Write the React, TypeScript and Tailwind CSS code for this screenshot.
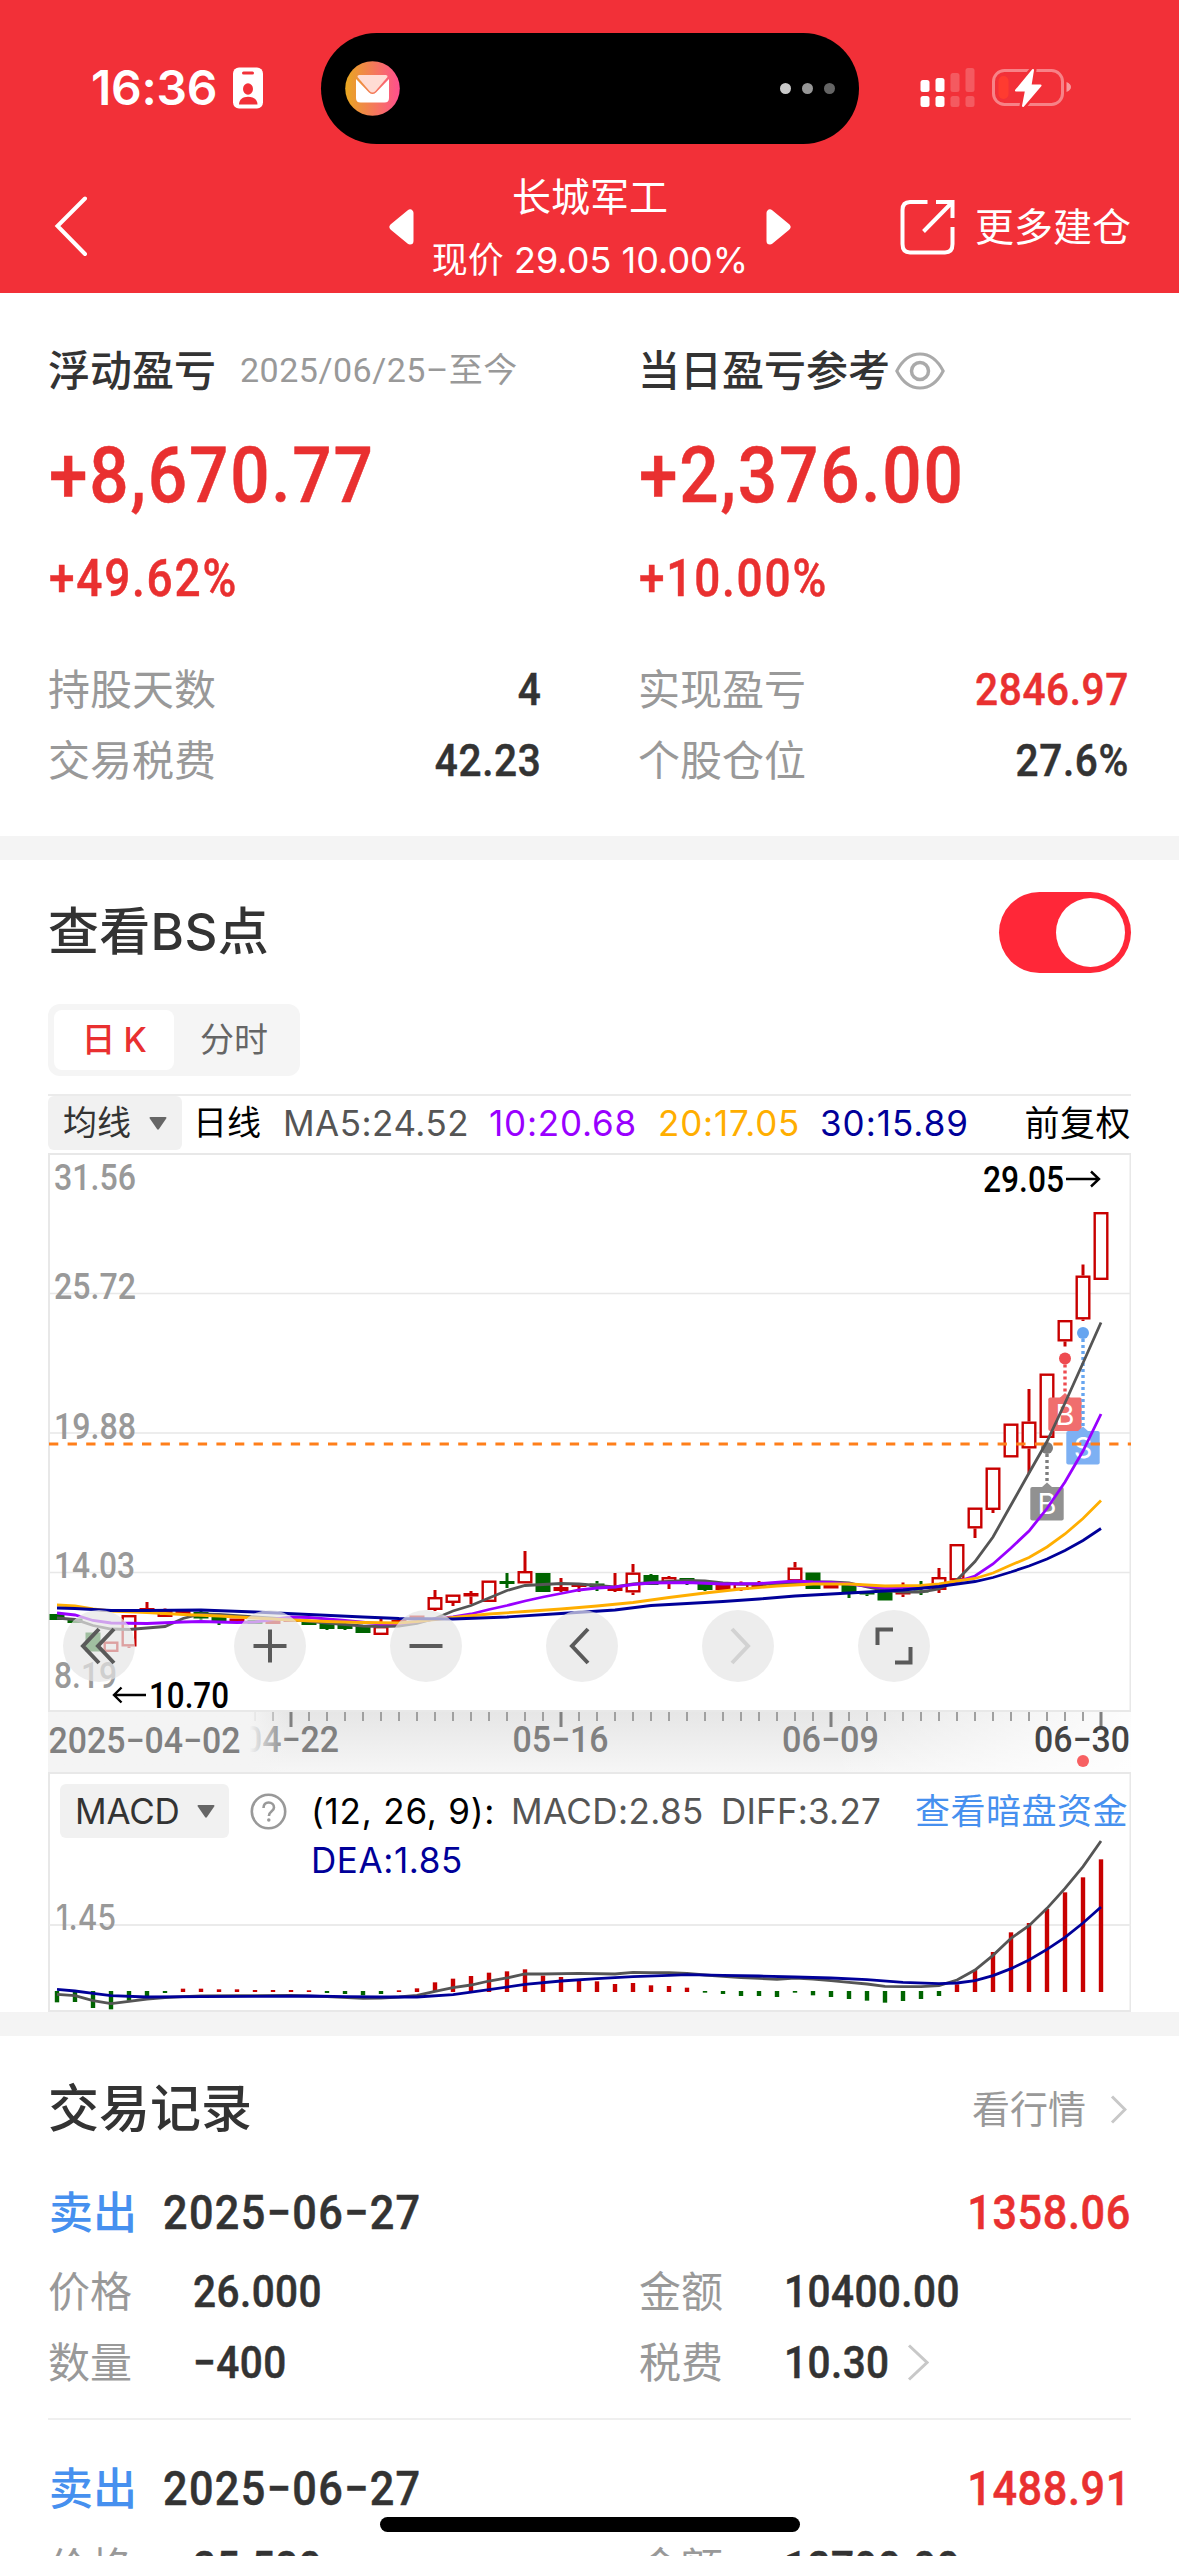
import React from "react";

const SANS = "font-['Inter','Noto_Sans_CJK_SC',sans-serif]";
const DIN = "font-['Roboto','Noto_Sans_CJK_SC',sans-serif] [-webkit-text-stroke:0.5px]";

/* One candle: [index, bodyTop, bodyBottom, wickTop, wickBottom, kind] */
type Kind = "up" | "upFill" | "down";
type Candle = [number, number, number, number, number, Kind];

const candles: Candle[] = [
  [0, 1614, 1620, 1614, 1620, "down"],
  [1, 1618.5, 1623, 1618.5, 1623, "down"],
  [2, 1632.5, 1651.5, 1632.5, 1651.5, "down"],
  [3, 1641.5, 1652, 1641.5, 1652, "up"],
  [4, 1615, 1646.5, 1615, 1648, "up"],
  [5, 1608, 1610.5, 1602, 1610.5, "upFill"],
  [6, 1611, 1617, 1608.5, 1617, "up"],
  [7, 1611, 1615, 1611, 1615, "upFill"],
  [8, 1612, 1618.5, 1611, 1619.5, "down"],
  [9, 1617, 1623, 1617, 1625, "down"],
  [10, 1618.5, 1621.5, 1618.5, 1621.5, "upFill"],
  [11, 1620, 1624, 1620, 1624, "down"],
  [12, 1620, 1624, 1620, 1624, "upFill"],
  [13, 1620, 1622, 1620, 1622, "upFill"],
  [14, 1621.5, 1625, 1621.5, 1625, "down"],
  [15, 1623, 1629, 1623, 1630, "down"],
  [16, 1624, 1629, 1624, 1630, "down"],
  [17, 1625, 1633, 1625, 1633, "down"],
  [18, 1626, 1635, 1619, 1635, "up"],
  [19, 1620, 1623, 1619, 1623, "upFill"],
  [20, 1615.5, 1619, 1615.5, 1619, "upFill"],
  [21, 1597, 1610, 1590, 1611, "up"],
  [22, 1594.5, 1603, 1594.5, 1606, "up"],
  [23, 1593, 1596.5, 1591, 1604, "upFill"],
  [24, 1580.5, 1602, 1580.5, 1602, "up"],
  [25, 1581, 1584, 1573, 1588, "down"],
  [26, 1571, 1583.5, 1551, 1583.5, "up"],
  [27, 1573, 1592, 1573, 1592, "down"],
  [28, 1587, 1591, 1578, 1592, "upFill"],
  [29, 1585, 1587, 1583, 1592, "upFill"],
  [30, 1583.5, 1587, 1581, 1591, "down"],
  [31, 1587, 1591, 1573, 1592, "upFill"],
  [32, 1572.5, 1592.5, 1564, 1595, "up"],
  [33, 1575, 1585, 1574, 1585, "down"],
  [34, 1577, 1583, 1576, 1589, "up"],
  [35, 1578, 1582, 1578, 1585, "down"],
  [36, 1582, 1590, 1582, 1591, "down"],
  [37, 1585, 1590, 1584, 1590, "upFill"],
  [38, 1583, 1590, 1581.5, 1591, "up"],
  [39, 1583, 1587, 1581, 1588, "upFill"],
  [40, 1583, 1586.5, 1581, 1587, "down"],
  [41, 1567.5, 1581.5, 1562, 1581.5, "up"],
  [42, 1572.5, 1589, 1572.5, 1589, "down"],
  [43, 1583.5, 1588.5, 1583.5, 1588.5, "upFill"],
  [44, 1585, 1593.5, 1585, 1598, "down"],
  [45, 1592, 1594.5, 1592, 1596, "down"],
  [46, 1592, 1600.5, 1592, 1600.5, "down"],
  [47, 1592, 1594.5, 1582.5, 1597, "upFill"],
  [48, 1590.5, 1592.5, 1581, 1595, "down"],
  [49, 1577, 1590, 1568, 1593, "up"],
  [50, 1544, 1580.5, 1544, 1580.5, "up"],
  [51, 1507.5, 1528.5, 1507.5, 1538, "up"],
  [52, 1467.5, 1510, 1467.5, 1513, "up"],
  [53, 1423.5, 1457.5, 1423.5, 1457.5, "up"],
  [54, 1421.5, 1448.5, 1389, 1473, "up"],
  [55, 1373.5, 1438, 1373.5, 1438, "up"],
  [56, 1320, 1341.5, 1320, 1346.5, "up"],
  [57, 1275.5, 1319.5, 1264.5, 1321, "up"],
  [58, 1212, 1280, 1212, 1280, "up"],
];

type Pt = [number, number];

const ma5: Pt[] = [[0,1618],[1,1619.5],[2,1625.5],[3,1629],[4,1629.5],[5,1628],[6,1626.5],[7,1618.5],[8,1614],[9,1614.5],[11,1617],[13,1619.5],[15,1623],[17,1626],[18,1626.5],[19,1626],[20,1623.5],[21,1618.5],[22,1611],[23,1605.5],[24,1598],[25,1590.5],[26,1585.5],[27,1584.5],[28,1583.5],[29,1584],[30,1585.5],[31,1587],[32,1584],[33,1582.5],[34,1581.5],[35,1580.5],[36,1581],[37,1583],[38,1584],[40,1584],[41,1582.5],[42,1582],[43,1582],[44,1583],[45,1587],[46,1590.5],[47,1592],[48,1592],[49,1589],[50,1580],[51,1561.5],[52,1537],[53,1505],[54,1473],[55,1441.5],[56,1403],[57,1363],[58,1322.5]];
const ma10: Pt[] = [[0,1613],[1,1615],[2,1620.5],[3,1623],[5,1623.5],[7,1622],[8,1621.5],[10,1622.5],[11,1622],[12,1619.5],[13,1617],[14,1617.5],[16,1620.5],[18,1624],[19,1623.5],[20,1621.5],[21,1619],[22,1617],[23,1614],[24,1609.5],[25,1605.5],[26,1601],[27,1597],[28,1593.5],[29,1590],[30,1588],[31,1587],[32,1584.5],[33,1583],[35,1582.5],[37,1584],[39,1583.5],[41,1581],[42,1582],[43,1582.5],[44,1584],[45,1586],[46,1588],[48,1588],[49,1585.5],[50,1581.5],[51,1576],[52,1564],[53,1548],[54,1531],[55,1508.5],[56,1482],[57,1451],[58,1414]];
const ma20: Pt[] = [[0,1605],[1,1606],[2,1609],[3,1611],[5,1612.5],[7,1614.5],[9,1616],[11,1618],[13,1620],[15,1621.5],[17,1622.5],[19,1623],[20,1621.5],[22,1617.5],[24,1614],[26,1611.5],[28,1609],[30,1606],[32,1602.5],[34,1597.5],[36,1593],[38,1589],[40,1586],[42,1584],[44,1584],[46,1586],[48,1585.5],[49,1584],[50,1581],[51,1578.5],[52,1573],[53,1565],[54,1557.5],[55,1547],[56,1534],[57,1518.5],[58,1500.5]];
const ma30: Pt[] = [[0,1608],[1,1608.5],[3,1610.5],[5,1610.5],[8,1610],[11,1612],[14,1614.5],[17,1617],[19,1618.5],[22,1619],[25,1617],[28,1613.5],[31,1610],[33,1605.5],[35,1603.5],[37,1601.5],[39,1599],[41,1596],[43,1594],[45,1592],[47,1590],[49,1586.5],[51,1581.5],[52,1577.5],[53,1572],[54,1566],[55,1559],[56,1550.5],[57,1540.5],[58,1528.5]];

/* MACD series in thirds of a pixel below the panel origin */
const histogram = [697,696,714,718,692,678,669,656,656,658,658,660,660,660,661,669,672,676,672,661,655,637,626,618,608,604,598,617,621,632,634,642,639,646,648,653,668,672,678,678,681,668,676,681,687,692,698,693,687,678,643,600,546,487,459,417,367,322,268];
const diff: Pt[] = [[0,673],[1,677],[2,692],[3,701],[4,694],[5,687],[6,683],[7,680],[8,678],[10,677],[13,676],[15,680],[17,685],[18,684],[19,681],[20,676],[21,664],[22,653],[23,645],[24,633],[25,624],[26,612],[27,612],[29,610],[31,612],[32,607],[33,608],[34,608],[35,610],[36,615],[37,619],[38,623],[39,625],[40,628],[41,624],[42,627],[43,632],[44,637],[45,642],[46,649],[47,650],[48,650],[49,647],[50,630],[51,600],[52,556],[53,505],[54,467],[55,415],[56,355],[57,290],[58,213]];
const dea: Pt[] = [[0,658],[1,663],[2,670],[3,677],[5,681],[8,680],[11,679],[14,678],[16,680],[18,681],[20,681],[22,674],[24,659],[26,643],[28,633],[30,626],[32,620],[34,616],[35,614],[37,616],[39,618],[41,621],[43,624],[45,629],[47,637],[49,641],[50,639],[51,632],[52,617],[53,596],[54,570],[55,538],[56,502],[57,459],[58,411]];

const cx = (k: number) => 57 + 18 * k;
const line = (pts: Pt[]) => pts.map(([k, y]) => `${cx(k)},${y}`).join(" ");
const macdLine = (pts: Pt[]) => pts.map(([k, y]) => `${cx(k)},${1770 + y / 3}`).join(" ");

const RED = "#c80000";
const GREEN = "#006400";

function CandleShape({ c }: { c: Candle }) {
  const [k, top, bottom, wickTop, wickBottom, kind] = c;
  const x = cx(k);
  const color = kind === "down" ? GREEN : RED;
  return (
    <g fill={color}>
      {wickTop < top && <rect x={x - 1.5} y={wickTop} width={3} height={top - wickTop} />}
      {wickBottom > bottom && <rect x={x - 1.5} y={bottom} width={3} height={wickBottom - bottom} />}
      {kind === "up" ? (
        <rect x={x - 6.3} y={top + 1.2} width={12.6} height={bottom - top - 2.4} fill="#fff" stroke={color} strokeWidth={2.4} />
      ) : (
        <rect x={x - 7.5} y={top} width={15} height={bottom - top} />
      )}
    </g>
  );
}

/* Condensed chart figure, fitted to a fixed advance width */
function Figure({ x, y, w, fill = "#000", children }: { x: number; y: number; w: number; fill?: string; children: string }) {
  return (
    <text x={x} y={y} fill={fill} fontFamily="Roboto" fontWeight={500} fontSize={36} textLength={w} lengthAdjust="spacingAndGlyphs">{children}</text>
  );
}

function Marker({ x, dot, box, letter, dotColor, boxColor }: { x: number; dot: number; box: number; letter: string; dotColor: string; boxColor: string }) {
  return (
    <g>
      <circle cx={x} cy={dot} r={6} fill={dotColor} />
      <line x1={x} x2={x} y1={dot + 6} y2={box - 3} stroke={dotColor} strokeWidth={3.4} strokeDasharray="3 3" />
      <path d={`M${x - 6} ${box + 1}l6 -5.5l6 5.5z`} fill={boxColor} />
      <rect x={x - 16.7} y={box} width={33.4} height={33.4} rx={2} fill={boxColor} />
      <text x={x} y={box + 27} textAnchor="middle" fill="#fff" fontFamily="Inter" fontSize={29}>{letter}</text>
    </g>
  );
}

function PriceChart() {
  const labels: [string, number, number][] = [["31.56", 1190, 82], ["25.72", 1299, 82], ["19.88", 1438.5, 82], ["14.03", 1578, 81], ["8.19", 1688, 63]];
  return (
    <svg className="block" width={1083} height={559} viewBox="48 1153 1083 559">
      <g stroke="#e8e8e8" strokeWidth={2} fill="none">
        <path d="M49 1154H1130.5V1711H49z" />
        <path d="M49 1293.5H1131M49 1433H1131M49 1572.5H1131" strokeWidth={1.5} />
      </g>
      {labels.map(([t, y, w]) => <Figure key={t} x={54} y={y} w={w} fill="#999">{t}</Figure>)}
      {candles.map((c) => <CandleShape key={c[0]} c={c} />)}
      <Marker x={1047} dot={1448} box={1487} letter="B" dotColor="#7d7d7d" boxColor="#919191" />
      <Marker x={1065} dot={1358.5} box={1397.5} letter="B" dotColor="#ee4b50" boxColor="#f06e6e" />
      <Marker x={1083} dot={1333} box={1431} letter="S" dotColor="#66a5f0" boxColor="#7db0f3" />
      <line x1={49} x2={1131} y1={1444} y2={1444} stroke="#ff7f1a" strokeWidth={3} strokeDasharray="9.3 9.3" />
      <g fill="none" strokeWidth={2.8}>
        <polyline points={line(ma5)} stroke="#555" />
        <polyline points={line(ma10)} stroke="#9900ff" />
        <polyline points={line(ma20)} stroke="#ffae00" />
        <polyline points={line(ma30)} stroke="#000099" />
      </g>
      <Figure x={983} y={1192} w={81}>29.05</Figure>
      <Figure x={149} y={1708} w={80}>10.70</Figure>
      <g fill="none" stroke="#000" strokeWidth={2.4}>
        <path d="M1066 1179H1099M1091 1171.5L1099 1179L1091 1186.5" />
        <path d="M146 1695H114M121.5 1687.5L114 1695L121.5 1702.5" />
      </g>
    </svg>
  );
}

function RoundButton({ children }: { children: React.ReactNode }) {
  return (
    <span className="flex size-[72px] items-center justify-center rounded-full bg-[#e6e6e6]/70">
      <svg width={72} height={72} viewBox="0 0 72 72" fill="none" stroke="#5a5a5a" strokeWidth={4}>{children}</svg>
    </span>
  );
}

function Axis() {
  return (
    <div className="relative h-[60px] w-[1083px]">
      <div className="absolute inset-0 bg-linear-to-b from-[#e6e6e6] to-[#f6f6f6]" />
      <div className="absolute inset-0 bg-linear-to-r from-transparent from-72% to-white/90" />
      <svg className="absolute inset-0" width={1083} height={60} viewBox="48 1712 1083 60">
        {Array.from({ length: 48 }, (_, i) => i + 11).map((k) => {
          const major = (k - 13) % 15 === 0;
          return <rect key={k} x={cx(k) - (major ? 1.5 : 1)} y={1712} width={major ? 3 : 2} height={major ? 15 : 9} fill={major ? "#808080" : "#a0a0a0"} />;
        })}
        <Figure x={243} y={1752} w={96} fill="#808080">04−22</Figure>
        <Figure x={512.5} y={1752} w={96} fill="#808080">05−16</Figure>
        <Figure x={782} y={1752} w={97} fill="#808080">06−09</Figure>
        <Figure x={1034} y={1752} w={96} fill="#444">06−30</Figure>
      </svg>
      <div className="absolute inset-y-0 left-0 w-[240px] bg-linear-to-r from-[#f4f4f4] from-84% to-[#f4f4f4]/0" />
      <svg className="absolute left-0 top-0" width={300} height={60} viewBox="48 1712 300 60">
        <Figure x={48.5} y={1753} w={192} fill="#808080">2025−04−02</Figure>
      </svg>
      <span className="absolute right-[42px] top-[43px] size-3 rounded-full bg-[#f76062]" />
    </div>
  );
}

function MacdChart() {
  return (
    <svg className="absolute inset-0" width={1083} height={240} viewBox="48 1772 1083 240">
      <path d="M49 1773H1130.5V2011H49z" fill="none" stroke="#e8e8e8" strokeWidth={2} />
      <path d="M49 1925H1131" stroke="#ebebeb" strokeWidth={2} />
      <text x={56} y={1930} fontFamily="Inter" fontWeight={500} fontSize={35} textLength={60} lengthAdjust="spacingAndGlyphs" fill="#999">1.45</text>
      {histogram.map((v, k) => {
        const y = 1770 + v / 3;
        return v < 663
          ? <rect key={k} x={cx(k) - 2.2} y={y} width={4.4} height={1992 - y} fill={RED} />
          : <rect key={k} x={cx(k) - 2.2} y={1991} width={4.4} height={y - 1991} fill={GREEN} />;
      })}
      <g fill="none" strokeWidth={2.8}>
        <polyline points={macdLine(diff)} stroke="#555" />
        <polyline points={macdLine(dea)} stroke="#000099" />
      </g>
    </svg>
  );
}

function Caret({ className = "" }: { className?: string }) {
  return (
    <svg className={className} width={18} height={13} viewBox="0 0 18 13">
      <path d="M1.5 0H16.5Q18 0 17.2 1.5L10 12Q9 13.3 8 12L.8 1.5Q0 0 1.5 0z" fill="#666" />
    </svg>
  );
}

function Chevron({ w, h }: { w: number; h: number }) {
  return (
    <svg width={w} height={h} viewBox={`0 0 ${w} ${h}`} fill="none" stroke="#c8c8c8" strokeWidth={3}>
      <path d={`M2 1.5L${w - 2} ${h / 2}L2 ${h - 1.5}`} />
    </svg>
  );
}

function StatusBar() {
  return (
    <div className="flex h-[177px] items-start">
      <div className={`flex w-[321px] items-center pl-[91px] pt-[60px] ${SANS}`}>
        <span className="w-[142px] text-[48px] font-semibold leading-[56px] tracking-[-0.3px]">16:36</span>
        <svg width={30} height={42} viewBox="0 0 30 42">
          <rect width={30} height={41} rx={6} y={0.5} fill="#fff" />
          <rect x={9} y={4.5} width={12} height={3} rx={1.5} fill="#f23038" />
          <ellipse cx={15} cy={22} rx={5} ry={5.8} fill="#f23038" />
          <path d="M6 37.5C6 32.5 10 29.8 15 29.8S24.5 32.5 24.5 37.5z" fill="#f23038" />
        </svg>
      </div>
      <div className="mt-[33px] flex h-[111px] w-[538px] items-center justify-between rounded-full bg-black pl-6 pr-6">
        <svg width={55} height={55} viewBox="0 0 55 55">
          <defs>
            <linearGradient id="mail"><stop offset="0" stopColor="#e8a820" /><stop offset="1" stopColor="#ff4f8e" /></linearGradient>
          </defs>
          <circle cx={27.5} cy={27.5} r={27.3} fill="url(#mail)" />
          <path d="M11 18L24 31.5Q27.5 34.5 31 31.5L44 18V37Q44 41.5 39.5 41.5H15.5Q11 41.5 11 37z" fill="#fff" />
          <path d="M14 14H41Q43 14.5 42.5 16L30.5 30Q27.5 33 24.5 30L12.5 16Q12 14.5 14 14z" fill="#ffdcd4" />
        </svg>
        <span className="flex gap-[11px]">
          <i className="size-[11px] rounded-full bg-[#cacaca]" />
          <i className="size-[11px] rounded-full bg-[#979797]" />
          <i className="size-[11px] rounded-full bg-[#646464]" />
        </span>
      </div>
      <svg className="ml-[60px] mt-[66px]" width={156} height={44} viewBox="919 66 156 44">
        <g fill="#fff">
          <rect x={920.5} y={80} width={9} height={12} rx={2.5} />
          <rect x={935.5} y={78} width={9} height={14} rx={2.5} />
          <rect x={920.5} y={96} width={9} height={11} rx={2.5} />
          <rect x={935.5} y={96} width={9} height={11} rx={2.5} />
          <g opacity={0.2}>
            <rect x={950.5} y={73} width={9} height={19} rx={2.5} />
            <rect x={965.5} y={68} width={9} height={24} rx={2.5} />
            <rect x={950.5} y={96} width={9} height={11} rx={2.5} />
            <rect x={965.5} y={96} width={9} height={11} rx={2.5} />
          </g>
          <path d="M1066.5 82Q1071 84 1071 87T1066.5 92z" opacity={0.5} />
        </g>
        <rect x={993.5} y={70.5} width={69} height={34} rx={11} fill="none" stroke="#fff" strokeOpacity={0.4} strokeWidth={3} />
        <rect x={998.5} y={76} width={10} height={23} rx={5} fill="#ff3b30" />
        <path d="M1033 70L1016 90.5H1026L1023 106L1040.5 85.5H1030.5z" fill="#fff" stroke="#f23038" strokeWidth={7} strokeLinejoin="round" />
        <path d="M1033 70L1016 90.5H1026L1023 106L1040.5 85.5H1030.5z" fill="#fff" stroke="#fff" strokeWidth={2} strokeLinejoin="round" />
      </svg>
    </div>
  );
}

function NavBar() {
  return (
    <div className="flex h-[116px]">
      <svg className="ml-[54px] mt-[18px]" width={34} height={62} viewBox="54 195 34 62" fill="none" stroke="#fff" strokeWidth={4} strokeLinecap="round">
        <path d="M85 198.5L57.5 226L85 254" />
      </svg>
      <svg className="ml-[300px] mt-[32px]" width={27} height={36} viewBox="0 0 27 36">
        <path d="M22 4V32L5 18z" fill="#fff" stroke="#fff" strokeWidth={7} strokeLinejoin="round" />
      </svg>
      <div className={`flex w-[350px] flex-col items-center ${SANS}`}>
        <span className="mt-[-3px] text-[39px] leading-[46px]">长城军工</span>
        <span className="mt-[17px] whitespace-nowrap text-[36px] leading-[46px]">现价 29.05 10.00%</span>
      </div>
      <svg className="mt-[32px]" width={27} height={36} viewBox="0 0 27 36">
        <path d="M5 4V32L22 18z" fill="#fff" stroke="#fff" strokeWidth={7} strokeLinejoin="round" />
      </svg>
      <svg className="ml-[108px] mt-[22px]" width={56} height={56} viewBox="901 199 56 56" fill="none" stroke="#fff" strokeWidth={4}>
        <path d="M928.5 202H911Q903.5 202 903.5 210V244Q903.5 252.5 911 252.5H946Q953.5 252.5 953.5 244V227" />
        <path d="M937 202H953.5V218M953 202.5L924.5 231.5" />
      </svg>
      <span className={`ml-[19px] mt-[22px] whitespace-nowrap text-[39px] leading-[56px] ${SANS}`}>更多建仓</span>
    </div>
  );
}

function StatRow({ label, value, red = false }: { label: string; value: string; red?: boolean }) {
  return (
    <div className="flex h-[71px] items-center justify-between">
      <span className={`text-[42px] leading-[60px] text-[#999] ${SANS}`}>{label}</span>
      <span className={`origin-right scale-x-90 text-[45px] font-medium leading-[60px] tracking-[0.7px] ${DIN} ${red ? "text-[#e93030]" : "text-[#333]"}`}>{value}</span>
    </div>
  );
}

function Headline({ amount, percent }: { amount: string; percent: string }) {
  return (
    <div className={`ml-px font-medium text-[#e93030] ${DIN}`}>
      <div className="mt-[29px] h-[90px] origin-left scale-x-90 text-[77px] leading-[90px] tracking-[2px]">{amount}</div>
      <div className="mt-[28px] h-[60px] origin-left scale-x-90 text-[51px] leading-[60px] tracking-[2px]">{percent}</div>
    </div>
  );
}

function Summary() {
  return (
    <section className="grid h-[543px] grid-cols-[590px_589px] content-start pt-[46px]">
      <div className="pl-[48px] pr-[49px]">
        <div className={`flex h-[63px] items-center ${SANS}`}>
          <span className="text-[42px] font-medium text-[#333]">浮动盈亏</span>
          <span className="ml-[24px] whitespace-nowrap font-['Roboto','Noto_Sans_CJK_SC',sans-serif] text-[34px] tracking-[0.5px] text-[#999]">2025/06/25–至今</span>
        </div>
        <Headline amount="+8,670.77" percent="+49.62%" />
        <div className="mt-[45px]">
          <StatRow label="持股天数" value="4" />
          <StatRow label="交易税费" value="42.23" />
        </div>
      </div>
      <div className="pl-[48px] pr-[50px]">
        <div className={`flex h-[63px] items-center ${SANS}`}>
          <span className="text-[42px] font-medium text-[#333]">当日盈亏参考</span>
          <svg className="ml-[5px]" width={50} height={38} viewBox="0 0 50 38" fill="none" stroke="#aaa" strokeWidth={3}>
            <path d="M1.8 19C8 7 16 2 25 2S42 7 48.2 19C42 31 34 36 25 36S8 31 1.8 19z" />
            <circle cx={25} cy={19} r={8.5} strokeWidth={3.5} />
          </svg>
        </div>
        <Headline amount="+2,376.00" percent="+10.00%" />
        <div className="mt-[45px]">
          <StatRow label="实现盈亏" value="2846.97" red />
          <StatRow label="个股仓位" value="27.6%" />
        </div>
      </div>
    </section>
  );
}

function ChartSection() {
  return (
    <section className={`h-[1152px] px-[48px] ${SANS}`}>
      <div className="flex h-[144px] items-center justify-between">
        <h2 className="text-[51px] font-medium leading-[60px] tracking-[0.3px] text-[#333]">查看BS点</h2>
        <span className="flex h-[81px] w-[132px] items-center justify-end rounded-full bg-[#ff2738] pr-[6px]">
          <i className="size-[69px] rounded-full bg-white" />
        </span>
      </div>
      <div className="flex h-[72px] w-[252px] items-center rounded-[12px] bg-[#f5f5f5] p-[6px]">
        <span className="h-[60px] w-[120px] rounded-[8px] bg-white text-center text-[34px] font-medium leading-[60px] tracking-[-0.5px] text-[#e93030]">日 K</span>
        <span className="flex-1 text-center text-[34px] leading-[60px] text-[#666]">分时</span>
      </div>
      <div className="mt-[18px] flex h-[59px] items-center whitespace-nowrap border-t-2 border-[#ebebeb] pb-[3px] text-[35px] leading-[54px] tracking-[0.5px]">
        <span className="flex h-[54px] w-[134px] shrink-0 items-center rounded-[6px] bg-[#f1f1f1] pl-[15px] text-[34px] tracking-normal text-[#333]">均线<Caret className="ml-[18px]" /></span>
        <span className="w-[86px] shrink-0 pl-[11px] text-[34px] tracking-normal">日线</span>
        <span className="w-[206px] shrink-0 pl-[15px] text-[#555]">MA5:24.52</span>
        <span className="w-[170px] shrink-0 pl-[15px] tracking-[0.8px] text-[#9900ff]">10:20.68</span>
        <span className="w-[163px] shrink-0 pl-[14px] tracking-[0.8px] text-[#ffae00]">20:17.05</span>
        <span className="shrink-0 pl-[13px] tracking-[1px] text-[#000099]">30:15.89</span>
        <span className="ml-auto">前复权</span>
      </div>
      <div className="relative">
        <PriceChart />
        <div className="absolute left-[15px] top-[457px] flex">
          <RoundButton><path d="M36 19L20 36L36 53M51 19L35 36L51 53" /></RoundButton>
          <span className="w-[99px]" />
          <div className="flex gap-[84px]">
            <RoundButton><path d="M19.5 36H52.5M36 19.5V52.5" /></RoundButton>
            <RoundButton><path d="M19.5 36H52.5" /></RoundButton>
            <RoundButton><path d="M42 19L26 36L42 53" /></RoundButton>
            <RoundButton><path d="M30 19L46 36L30 53" stroke="#d2d2d2" /></RoundButton>
            <RoundButton><path d="M19.5 35V19.5H35M37 52.5H52.5V37" /></RoundButton>
          </div>
        </div>
      </div>
      <Axis />
      <div className="relative h-[240px] w-[1083px]">
        <MacdChart />
        <div className="relative flex whitespace-nowrap pl-3 pt-[12px] text-[35px] tracking-[0.4px]">
          <span className="flex h-[54px] w-[169px] items-center rounded-[6px] bg-[#f1f1f1] pl-[15px] tracking-[-0.2px] text-[#333]"><span className="w-[122px]">MACD</span><Caret /></span>
          <svg className="ml-[21px] mt-[9px]" width={37} height={37} viewBox="0 0 37 37" fill="none" stroke="#999" strokeWidth={2.6}>
            <circle cx={18.5} cy={18.5} r={16.7} />
            <path d="M13.5 15C13.5 11.5 15.5 9.5 18.6 9.5S24 11.5 24 14.5C24 18.5 18.9 18 18.9 23" />
            <circle cx={18.8} cy={27} r={1} fill="#999" strokeWidth={1.5} />
          </svg>
          <div className="ml-[24px] w-[590px] pt-[3px] leading-[49px]">
            <div>
              <span className="inline-block w-[200px] tracking-[0.8px]">(12, 26, 9):</span>
              <span className="inline-block w-[210px] text-[#555]">MACD:2.85</span>
              <span className="tracking-[0.2px] text-[#555]">DIFF:3.27</span>
            </div>
            <div className="tracking-[0.6px] text-[#000099]">DEA:1.85</div>
          </div>
          <span className="ml-auto mr-[3px] text-[35px] leading-[54px] tracking-[0.5px] text-[#4690ef]">查看暗盘资金</span>
        </div>
      </div>
    </section>
  );
}

interface Trade { side: string; date: string; profit: string; price: string; amount: string; qty: string; fee: string }

const trades: Trade[] = [
  { side: "卖出", date: "2025−06−27", profit: "1358.06", price: "26.000", amount: "10400.00", qty: "−400", fee: "10.30" },
  { side: "卖出", date: "2025−06−27", profit: "1488.91", price: "25.580", amount: "12790.00", qty: "−500", fee: "11.52" },
];

function TradeItem({ t }: { t: Trade }) {
  const label = `w-[145px] text-[42px] text-[#999] ${SANS}`;
  const value = `origin-left scale-x-90 text-[45px] font-medium tracking-[0.5px] text-[#333] ${DIN}`;
  return (
    <div className="h-[276px] border-b-2 border-[#efefef] pt-[35px] leading-[60px]">
      <div className="flex h-[68px] items-center">
        <span className={`w-[115px] pl-px text-[44px] font-medium text-[#4690ef] ${SANS}`}>{t.side}</span>
        <span className={`origin-left scale-x-90 text-[48px] font-medium tracking-[1.5px] text-[#333] ${DIN}`}>{t.date}</span>
        <span className={`ml-auto origin-right scale-x-90 text-[48px] font-medium tracking-[0.7px] text-[#e93030] ${DIN}`}>{t.profit}</span>
      </div>
      <div className="mt-[9px] grid grid-cols-[591px_1fr]">
        <div className="flex h-[71px] items-center"><span className={label}>价格</span><span className={value}>{t.price}</span></div>
        <div className="flex h-[71px] items-center"><span className={label}>金额</span><span className={value}>{t.amount}</span></div>
        <div className="flex h-[71px] items-center"><span className={label}>数量</span><span className={value}>{t.qty}</span></div>
        <div className="flex h-[71px] items-center"><span className={label}>税费</span><span className={`mr-[6px] ${value}`}>{t.fee}</span><Chevron w={22} h={37} /></div>
      </div>
    </div>
  );
}

export default function App() {
  return (
    <main className="relative h-[2556px] w-[1179px] overflow-hidden bg-white">
      <header className="h-[293px] bg-[#f23038] text-white">
        <StatusBar />
        <NavBar />
      </header>
      <Summary />
      <div className="h-6 bg-[#f4f4f4]" />
      <ChartSection />
      <div className="h-6 bg-[#f4f4f4]" />
      <section className="px-[48px]">
        <div className={`flex h-[108px] items-end justify-between pb-[4px] ${SANS}`}>
          <h2 className="text-[51px] font-medium leading-[62px] text-[#333]">交易记录</h2>
          <span className="flex items-center gap-[24px] pr-1 text-[38px] leading-[62px] text-[#999]">看行情<Chevron w={17} h={29} /></span>
        </div>
        {trades.map((t) => <TradeItem key={t.profit} t={t} />)}
      </section>
      <div className="absolute bottom-[24px] left-[380px] h-[15px] w-[420px] rounded-full bg-black" />
    </main>
  );
}
